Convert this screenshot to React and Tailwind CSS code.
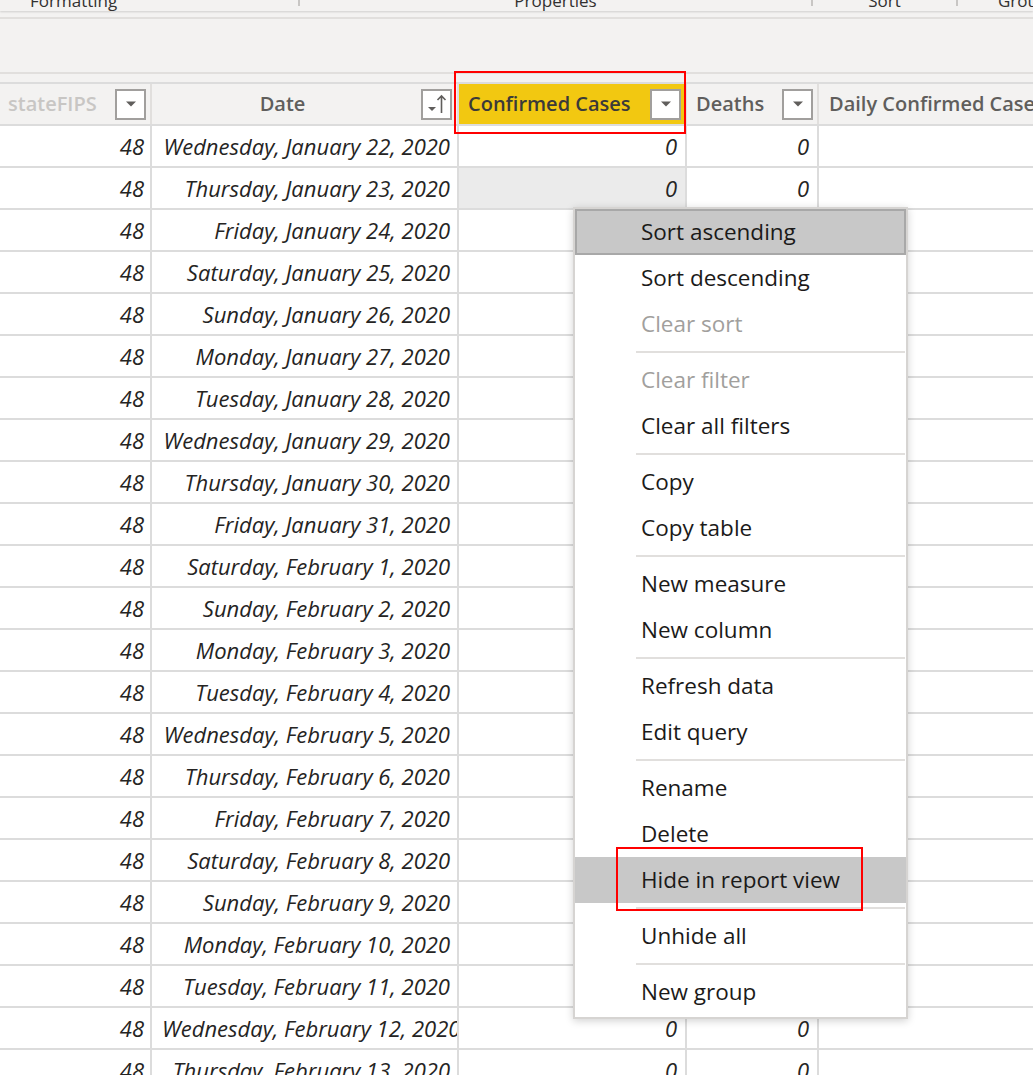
import React from 'react';

const days = ['Sunday', 'Monday', 'Tuesday', 'Wednesday', 'Thursday', 'Friday', 'Saturday'];
const months = ['January', 'February', 'March'];

// Jan 22 2020 was a Wednesday
const buildRows = () => {
    const rows = [];
    let month = 0;
    let day = 22;
    for (let i = 0; i < 23; i++) {
        rows.push({
            fips: 48,
            date: `${days[(3 + i) % 7]}, ${months[month]} ${day}, 2020`,
            confirmed: 0,
            deaths: 0
        });
        day++;
        if (month === 0 && day > 31) {
            month = 1;
            day = 1;
        }
    }
    return rows;
};

const rows = buildRows();

const menuGroups = [
    [
        { label: 'Sort ascending', active: true },
        { label: 'Sort descending' },
        { label: 'Clear sort', disabled: true }
    ],
    [
        { label: 'Clear filter', disabled: true },
        { label: 'Clear all filters' }
    ],
    [{ label: 'Copy' }, { label: 'Copy table' }],
    [{ label: 'New measure' }, { label: 'New column' }],
    [{ label: 'Refresh data' }, { label: 'Edit query' }],
    [{ label: 'Rename' }, { label: 'Delete' }, { label: 'Hide in report view', hover: true }],
    [{ label: 'Unhide all' }],
    [{ label: 'New group' }]
];

const FilterBox = () => (
    <div className="w-[31px] h-[31px] bg-white border-2 border-[#a19f9d] flex items-center justify-center shrink-0">
        <svg width="12" height="8" viewBox="0 0 12 8">
            <path d="M1 1.5 L11 1.5 L6 6.5 Z" fill="#605e5c" />
        </svg>
    </div>
);

const SortBox = () => (
    <div className="w-[31px] h-[31px] bg-white border-2 border-[#a19f9d] flex items-center justify-center shrink-0">
        <svg width="24" height="24" viewBox="0 0 24 24">
            <path d="M3 15 L11 15 L7 19 Z" fill="#605e5c" />
            <path d="M16.5 21 L16.5 4 M12.5 8 L16.5 4 L20.5 8" stroke="#605e5c" strokeWidth="1.6" fill="none" />
        </svg>
    </div>
);

const App = () => {
    return (
        <div
            className="relative w-[1033px] h-[1075px] overflow-hidden bg-white"
            style={{ fontFamily: '"Open Sans", "Liberation Sans", sans-serif' }}
        >
            {/* ribbon bottom */}
            <div className="h-[11px] bg-[#f3f2f1] overflow-hidden flex shadow-[0_1px_2px_rgba(0,0,0,0.15)] relative">
                <div className="w-[300px] border-r-2 border-[#c8c6c4] h-[6px] shrink-0">
                    <div className="-mt-[9px] pl-[30px] text-[17px] text-[#323130] leading-[20px]">Formatting</div>
                </div>
                <div className="w-[513px] border-r-2 border-[#c8c6c4] h-[6px] shrink-0">
                    <div className="-mt-[9px] text-center text-[17px] text-[#323130] leading-[20px]">Properties</div>
                </div>
                <div className="w-[145px] border-r-2 border-[#c8c6c4] h-[6px] shrink-0">
                    <div className="-mt-[9px] text-center text-[17px] text-[#323130] leading-[20px]">Sort</div>
                </div>
                <div className="flex-1 h-[6px]">
                    <div className="-mt-[9px] pl-[40px] text-[17px] text-[#323130] leading-[20px] whitespace-nowrap">Groups</div>
                </div>
            </div>
            <div className="h-[6px] bg-[#f3f2f1]" />
            <div className="h-[2px] bg-[#e1dfdd]" />
            <div className="h-[53px] bg-[#f3f2f1]" />
            <div className="h-[2px] bg-[#e1dfdd]" />
            <div className="h-[8px] bg-[#f3f2f1]" />

            {/* header */}
            <div className="grid grid-cols-[152px_307px_228px_132px_1fr] h-[44px] bg-[#f3f2f1] border-t-2 border-b-2 border-[#dcdcdc] text-[20px] font-semibold">
                <div className="flex items-center border-r-2 border-[#e1dfdd] pl-[8px] pr-[4px]">
                    <span className="flex-1 text-[#c8c6c4] whitespace-nowrap overflow-hidden">stateFIPS</span>
                    <FilterBox />
                </div>
                <div className="flex items-center border-r-2 border-[#e1dfdd] pr-[5px]">
                    <span className="flex-1 text-center text-[#605e5c] pr-[8px]">Date</span>
                    <SortBox />
                </div>
                <div className="flex items-center border-r-2 border-[#e1dfdd] bg-[#f2c811] pl-[9px] pr-[4px]">
                    <span className="flex-1 text-[#3b3a39] whitespace-nowrap">Confirmed Cases</span>
                    <FilterBox />
                </div>
                <div className="flex items-center border-r-2 border-[#e1dfdd] pl-[9px] pr-[4px]">
                    <span className="flex-1 text-[#605e5c]">Deaths</span>
                    <FilterBox />
                </div>
                <div className="flex items-center pl-[10px] overflow-hidden">
                    <span className="text-[#605e5c] whitespace-nowrap">Daily Confirmed Cases</span>
                </div>
            </div>

            {/* rows */}
            {rows.map((row, index) => (
                <div
                    key={index}
                    className="grid grid-cols-[152px_307px_228px_132px_1fr] h-[42px] border-b-2 border-[#dcdcdc] text-[22px] italic text-[#252423]"
                >
                    <div className="flex items-center justify-end border-r-2 border-[#dcdcdc] pr-[6px]">{row.fips}</div>
                    <div className="flex items-center border-r-2 border-[#dcdcdc] pl-[10px] pr-[7px] overflow-hidden">
                        <span className="w-full text-right whitespace-nowrap">{row.date}</span>
                    </div>
                    <div className={`flex items-center justify-end border-r-2 border-[#dcdcdc] pr-[8px] ${index === 1 ? 'bg-[#ebebeb]' : ''}`}>
                        {row.confirmed}
                    </div>
                    <div className="flex items-center justify-end border-r-2 border-[#dcdcdc] pr-[8px]">{row.deaths}</div>
                    <div />
                </div>
            ))}

            {/* red highlight on column header */}
            <div className="absolute left-[454px] top-[71px] w-[232px] h-[63px] border-2 border-[#ff0000]" />

            {/* context menu */}
            <div className="absolute left-[573px] top-[207px] w-[335px] bg-white border-2 border-[#d6d4d2] shadow-[0_2px_8px_rgba(0,0,0,0.18)] pb-[2px] text-[22.5px]">
                {menuGroups.map((group, gi) => (
                    <div key={gi}>
                        {gi > 0 && (
                            <div className="h-[10px] flex items-center pl-[61px] pr-[1px]">
                                <div className="h-[2px] w-full bg-[#e1dfdd]" />
                            </div>
                        )}
                        {group.map((item) => (
                            <div
                                key={item.label}
                                className={`h-[46px] flex items-center pl-[66px] whitespace-nowrap ${
                                    item.disabled ? 'text-[#a19f9d]' : 'text-[#1b1a19]'
                                } ${item.active ? 'bg-[#c8c8c8] ring-2 ring-inset ring-[#a8a8a8]' : ''} ${
                                    item.hover ? 'bg-[#c8c8c8]' : ''
                                }`}
                            >
                                {item.label}
                            </div>
                        ))}
                    </div>
                ))}
            </div>

            {/* red highlight on menu item */}
            <div className="absolute left-[616px] top-[847px] w-[247px] h-[64px] border-2 border-[#ff0000]" />
        </div>
    );
};

export default App;
